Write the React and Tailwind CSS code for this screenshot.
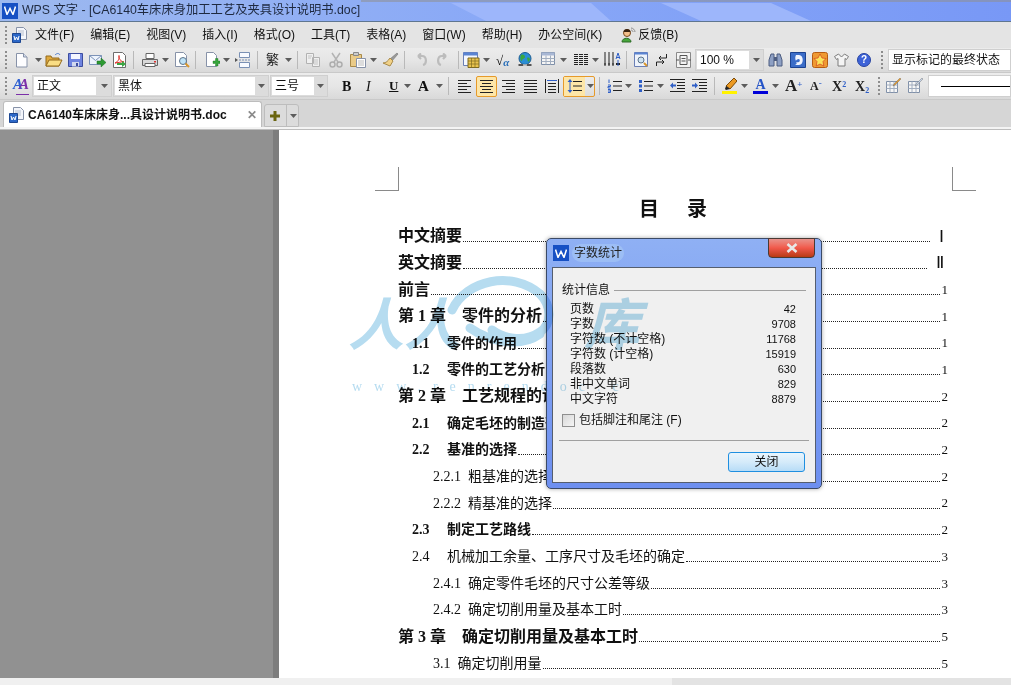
import React from "react";

const cjk = "font-['Liberation_Sans','Noto_Sans_CJK_SC',sans-serif]";
const serif = "font-['Liberation_Serif','Noto_Sans_CJK_SC',serif]";

const menus = ["文件(F)", "编辑(E)", "视图(V)", "插入(I)", "格式(O)", "工具(T)", "表格(A)", "窗口(W)", "帮助(H)", "办公空间(K)"];

const tocRows = [
  { label: "中文摘要", page: "Ⅰ", kind: "top" },
  { label: "英文摘要", page: "Ⅱ", kind: "top" },
  { label: "前言", page: "1", kind: "top" },
  { label: "第 1 章    零件的分析", page: "1", kind: "chapter" },
  { label: "1.1     零件的作用", page: "1", kind: "section" },
  { label: "1.2     零件的工艺分析", page: "1", kind: "section" },
  { label: "第 2 章    工艺规程的设计", page: "2", kind: "chapter" },
  { label: "2.1     确定毛坯的制造形式", page: "2", kind: "section" },
  { label: "2.2     基准的选择", page: "2", kind: "section" },
  { label: "2.2.1  粗基准的选择", page: "2", kind: "sub" },
  { label: "2.2.2  精基准的选择", page: "2", kind: "sub" },
  { label: "2.3     制定工艺路线", page: "2", kind: "section" },
  { label: "2.4     机械加工余量、工序尺寸及毛坯的确定", page: "3", kind: "sectionLight" },
  { label: "2.4.1  确定零件毛坯的尺寸公差等级", page: "3", kind: "sub" },
  { label: "2.4.2  确定切削用量及基本工时", page: "3", kind: "sub" },
  { label: "第 3 章    确定切削用量及基本工时", page: "5", kind: "chapter" },
  { label: "3.1  确定切削用量", page: "5", kind: "sub2" },
];

const stats = [
  ["页数", "42"],
  ["字数", "9708"],
  ["字符数 (不计空格)", "11768"],
  ["字符数 (计空格)", "15919"],
  ["段落数", "630"],
  ["非中文单词", "829"],
  ["中文字符", "8879"],
];

function I({ children, w = 16, h = 16 }) {
  return (
    <svg width={w} height={h} viewBox={`0 0 ${w} ${h}`} className="shrink-0 block">
      {children}
    </svg>
  );
}

function Grip({ className = "" }) {
  return (
    <div className={`flex flex-col gap-[2px] w-[2px] shrink-0 ${className}`}>
      <span className="block w-[2px] h-[2px] bg-[#8d8d8d]" />
      <span className="block w-[2px] h-[2px] bg-[#8d8d8d]" />
      <span className="block w-[2px] h-[2px] bg-[#8d8d8d]" />
      <span className="block w-[2px] h-[2px] bg-[#8d8d8d]" />
      <span className="block w-[2px] h-[2px] bg-[#8d8d8d]" />
    </div>
  );
}

function Sep({ className = "" }) {
  return <div className={`w-[1px] h-[18px] bg-[#b9b9b9] shrink-0 ${className}`} />;
}

function Caret({ className = "" }) {
  return (
    <svg width="7" height="4" viewBox="0 0 7 4" className={`shrink-0 ${className}`}>
      <path d="M0 0h7L3.5 4z" fill="#5c5c5c" />
    </svg>
  );
}

const DocIcon = () => (
  <I>
    <path d="M2.5 1.5h7l3.5 3.5v10h-10.500z" fill="#fdfdff" stroke="#8792a8" />
    <path d="M9.500 1.500v3.500h3.500" fill="#d4dcec" stroke="#8792a8" />
  </I>
);
const OpenIcon = () => (
  <I w={18}>
    <path d="M1 4h5l1 2h7v8H1z" fill="#dfa93c" stroke="#946a1c" />
    <path d="M4 8h13l-3 6H1z" fill="#f9dd84" stroke="#946a1c" />
    <path d="M10 3c2-2 4-2 5 0" stroke="#4d7bc9" fill="none" />
  </I>
);
const SaveIcon = () => (
  <I w={15}>
    <path d="M.5 1.500h14v13H.5z" fill="#6f84e0" stroke="#3c4d9f" />
    <path d="M3 2h9v5H3z" fill="#f4f6ff" />
    <path d="M4 10h7v4.500H4z" fill="#d2d9ef" />
    <path d="M8 11h2v3H8z" fill="#3c4d9f" />
  </I>
);
const MailIcon = () => (
  <I w={17}>
    <path d="M.5 3.500h12v9H.5z" fill="#eef4fd" stroke="#7c93b8" />
    <path d="M.5 3.500l6 5 6-5" fill="none" stroke="#7c93b8" />
    <path d="M8 9h4V6l5 4.500-5 4.500v-3H8z" fill="#2d9a32" stroke="#1b6a20" strokeWidth=".5" />
  </I>
);
const PdfIcon = () => (
  <I w={15}>
    <path d="M1.500 .5h9l3 3v12h-12z" fill="#fff" stroke="#6d6d6d" />
    <path d="M3 11C6 10 8 6 7 3.500c-1 3 2 6 5 6.500-3-.5-7 1-9 1z" fill="none" stroke="#df2c25" />
    <path d="M5 11h5V9l4 3-4 3v-2H5z" fill="#3aa644" />
  </I>
);
const PrintIcon = () => (
  <I w={18}>
    <path d="M5 1.500h8v5H5z" fill="#fff" stroke="#666" />
    <path d="M1.500 7.500h15v6h-15z" fill="#d8d8d8" stroke="#666" />
    <path d="M4 11.500h10v3H4z" fill="#fff" stroke="#666" />
    <path d="M13 9h2v1.500h-2z" fill="#d33" />
  </I>
);
const PreviewIcon = () => (
  <I w={17}>
    <path d="M1.500 .5h8l3 3v11h-11z" fill="#fff" stroke="#8792a8" />
    <circle cx="9" cy="9" r="3.500" fill="#bfe3f7" stroke="#5d7389" />
    <path d="M11.500 11.500l3.500 3.500" stroke="#d9962b" strokeWidth="2" />
  </I>
);
const NewPlusIcon = () => (
  <I w={15}>
    <path d="M1.500 .5h7l3 3v11h-10z" fill="#fff" stroke="#8792a8" />
    <path d="M8 9h2.500V6.500h2.500V9h2v2.500h-2V14h-2.500v-2.500H8z" fill="#36a53b" stroke="#1d6e22" strokeWidth=".4" />
  </I>
);
const PageBreakIcon = () => (
  <I w={16}>
    <path d="M4.500 .5h10v5h-10zM4.500 10.500h10v5h-10z" fill="#f8faff" stroke="#7a90b4" />
    <path d="M0 6l3 2-3 2z" fill="#555" />
    <path d="M4 8h12" stroke="#7a90b4" strokeDasharray="2 1" />
  </I>
);
const CopyIcon = () => (
  <I w={16}>
    <path d="M1.500 1.500h7v10h-7zM7.500 5.500h7v9h-7z" fill="#f0f0f0" stroke="#b2b2b2" />
    <path d="M9 8h4M9 10h4M9 12h4M3 4h4M3 6h3" stroke="#c4c4c4" />
  </I>
);
const CutIcon = () => (
  <I w={14}>
    <path d="M3 1l6 9M11 1L5 10" stroke="#b3b3b3" strokeWidth="1.500" />
    <circle cx="3.500" cy="12.500" r="2.500" fill="none" stroke="#adadad" strokeWidth="1.500" />
    <circle cx="10.500" cy="12.500" r="2.500" fill="none" stroke="#adadad" strokeWidth="1.500" />
  </I>
);
const PasteIcon = () => (
  <I w={17}>
    <path d="M.5 2.500h11v12H.5z" fill="#eacb88" stroke="#a98a49" />
    <path d="M3.500 .5h5v3h-5z" fill="#ccc" stroke="#888" />
    <path d="M6.500 6.500h9v9h-9z" fill="#fff" stroke="#8792a8" />
    <path d="M8 9h6M8 11h6M8 13h6" stroke="#bbb" />
  </I>
);
const BrushIcon = () => (
  <I w={17}>
    <path d="M15 1l1 1-6 7-2-2z" fill="#9a9a9a" stroke="#666" strokeWidth=".5" />
    <path d="M8 6l3 3-3 5-7-3c3 0 5-2 7-5z" fill="#f1d187" stroke="#a98a49" />
  </I>
);
const UndoIcon = ({ flip }) => (
  <svg width="14" height="14" viewBox="0 0 14 14" className={`shrink-0 ${flip ? "-scale-x-100" : ""}`}>
    <path d="M4 3h4c5 0 5 8 1 9M4 3l3-2.500M4 3l3 3" fill="none" stroke="#bcbcbc" strokeWidth="2.200" />
  </svg>
);
const TableCalcIcon = () => (
  <I w={17}>
    <path d="M.5 .5h14v13H.5z" fill="#f4f7ff" stroke="#6a7fb5" />
    <path d="M.5 .5h14v3H.5z" fill="#5a84d2" />
    <path d="M5 6h11v9.500H5z" fill="#e9c34e" stroke="#7e6a21" />
    <path d="M5 9h11M5 12h11M8.500 6v9M12 6v9" stroke="#7e6a21" strokeWidth=".7" />
  </I>
);
const SqrtIcon = () => (
  <div className={`flex items-end w-[16px] h-[16px] text-[13px] leading-[14px] ${serif}`}>
    <span className="text-black">√</span>
    <span className="text-[#2a6fb8] italic font-bold text-[11px] leading-[12px]">α</span>
  </div>
);
const GlobeIcon = () => (
  <I w={16}>
    <circle cx="8" cy="6.500" r="6" fill="#2b8fd5" stroke="#1a5b90" />
    <path d="M4 3c2-1 4 0 4 2s-3 1-3 4c-2 0-2-4-1-6zM10 6c2-1 3 0 3 2l-2 2z" fill="#3aa83f" />
    <path d="M1.500 13h5M9.500 13h5" stroke="#555" strokeWidth="2" />
    <path d="M6 13h4" stroke="#bbb" strokeWidth="1.500" />
  </I>
);
const TableIcon = () => (
  <I w={14}>
    <path d="M.5 .5h13v12H.5z" fill="#f5f5f5" stroke="#7e8fa8" />
    <path d="M.5 .5h13v3H.5z" fill="#a8b7d4" />
    <path d="M.5 6.500h13M.5 9.500h13M5 3.500v9M9.500 3.500v9" stroke="#a2aec0" />
  </I>
);
const LinesIcon = () => (
  <I w={14} h={12}>
    <path d="M0 .5h14M0 2.500h14M0 4.500h14M0 6.500h14M0 8.500h14M0 10.500h14" stroke="#222" />
    <path d="M4.500 0v11M9.500 0v11" stroke="#e6e6e6" />
  </I>
);
const ColsIcon = () => (
  <I w={17}>
    <path d="M1 0v14M5 0v14M9 0v14" stroke="#222" />
    <path d="M.5 12h1M4.500 12h1M8.500 12h1M12 12h4" stroke="#222" strokeWidth="2" />
    <path d="M12 7l2-6 2 6M12.500 5.500h3M14 8v6" stroke="#2f5fc7" fill="none" />
  </I>
);
const ReviewIcon = () => (
  <I w={14}>
    <path d="M.5 .5h13v14H.5z" fill="#eef3fb" stroke="#6a7fb5" />
    <path d="M.5 .5h13v2H.5z" fill="#5a84d2" />
    <circle cx="7" cy="8" r="3" fill="#cfe3f2" stroke="#5d7389" />
    <path d="M10 11l3 3" stroke="#d9962b" strokeWidth="2" />
  </I>
);
const ArrowsIcon = () => (
  <I w={11} h={14}>
    <path d="M10.500 1v4H3M5 3L3 5l2 2M.5 13V9H8M6 7l2 2-2 2" fill="none" stroke="#222" />
  </I>
);
const FrameIcon = () => (
  <I w={15}>
    <path d="M.5 .5h14v15H.5z" fill="#f4f4f4" stroke="#8a8a8a" />
    <path d="M4 3.500h7v9H4zM5.500 6.500h4M5.500 9h4M0 8h3M12 8h3" fill="none" stroke="#555" />
  </I>
);
const BinocularsIcon = () => (
  <I w={15}>
    <path d="M1 14V8l2-6h3v12zM14 14V8l-2-6H9v12z" fill="#8ea0c4" stroke="#4d5d80" />
    <path d="M6 5h3v4H6z" fill="#4d5d80" />
  </I>
);
const BlueBoxIcon = () => (
  <I w={16}>
    <path d="M.5 .5h15v15H.5z" fill="#3b6dc8" stroke="#1c4391" />
    <path d="M6 3h3c5 0 5 10 0 10H5c2-1 2-2 1-3 3 1 5-1 3-3-2 0-3 1-3 2-1-2-1-4 0-6z" fill="#f1f5ff" />
  </I>
);
const StarBoxIcon = () => (
  <I w={16}>
    <rect x=".5" y=".5" width="15" height="15" rx="2" fill="#ef9a32" stroke="#b65c12" />
    <path d="M8 2l2 4 4 .5-3 3 .8 4.500L8 12l-3.800 2L5 9.500l-3-3L6 6z" fill="#fbe35a" stroke="#d3401f" strokeWidth=".7" />
  </I>
);
const ShirtIcon = () => (
  <I w={15}>
    <path d="M4.500 2L.5 4.500l2 3 1.500-1V14h7V6.500l1.500 1 2-3L10.500 2 7.500 5z" fill="#f4f4f4" stroke="#7b7b7b" />
  </I>
);
const HelpIcon = () => (
  <div className="w-[14px] h-[14px] rounded-full bg-[#3d63d8] border border-[#2743a0] text-white text-[10px] font-bold leading-[12px] text-center shrink-0 font-['Liberation_Sans',sans-serif]">
    ?
  </div>
);
const StyleIcon = () => (
  <div className={`relative w-[16px] h-[18px] shrink-0 italic font-bold text-[15px] leading-[15px] ${serif}`}>
    <span className="text-[#2d5fd2]">A</span>
    <span className="absolute left-[6px] top-0 text-[#7b2fa8]">A</span>
    <span className="absolute left-[3px] bottom-0 w-[13px] h-[1px] bg-[#7b2fa8]" />
  </div>
);
const Align = ({ kind }) => {
  const d = {
    left: "M0 .5h13M0 3.500h9M0 6.500h13M0 9.500h9M0 12.500h13",
    center: "M0 .5h13M2 3.500h9M0 6.500h13M2 9.500h9M0 12.500h13",
    right: "M0 .5h13M4 3.500h9M0 6.500h13M4 9.500h9M0 12.500h13",
    justify: "M0 .5h13M0 3.500h13M0 6.500h13M0 9.500h13M0 12.500h13",
  }[kind];
  return (
    <I w={13} h={13}>
      <path d={d} stroke="#222" />
    </I>
  );
};
const DistIcon = () => (
  <I w={14} h={14}>
    <path d="M.5 0v14M13.500 0v14M3 4.500h8M3 7.500h8M3 10.500h8M3 13.500h8" stroke="#222" />
    <path d="M2 1.500h10" stroke="#2f5fc7" />
  </I>
);
const SpacingIcon = () => (
  <I w={15} h={14}>
    <path d="M6 2.500h9M6 7h9M6 11.500h9" stroke="#222" />
    <path d="M3 0l2.500 3h-5zM3 14l2.500-3h-5zM2.500 3h1v8h-1z" fill="#2f5fc7" />
  </I>
);
const NumberIcon = () => (
  <I w={15} h={14}>
    <path d="M6 2.500h9M6 7h9M6 11.500h9" stroke="#222" />
    <path d="M2 .5v3.500M1 6h2.500v1.500H1V9h2.500M1 10.500h2.500v3H1M1 12h2.500" stroke="#2f5fc7" fill="none" />
  </I>
);
const BulletIcon = () => (
  <I w={14} h={14}>
    <path d="M5 2.500h9M5 7h9M5 11.500h9" stroke="#222" />
    <path d="M0 1h3v3H0zM0 5.500h3v3H0zM0 10h3v3H0z" fill="#2f5fc7" />
  </I>
);
const IndentIcon = ({ out }) => (
  <I w={15} h={14}>
    <path d="M0 .5h15M7 3.500h8M7 6.500h8M7 9.500h8M0 12.500h15" stroke="#222" />
    <path d={out ? "M0 6.500l3-3v2h3v2H3v2z" : "M6 6.500l-3-3v2H0v2h3v2z"} fill="#2f5fc7" />
  </I>
);
const PenIcon = () => (
  <I w={15}>
    <path d="M12 0l3 3-7 8-4-3z" fill="#ec9a23" stroke="#7b4a08" />
    <path d="M4 8l4 3-4 1-1-1z" fill="#222" />
    <path d="M0 13h15v3H0z" fill="#fff200" />
  </I>
);
const TableEditIcon = ({ tone }) => (
  <I w={15}>
    <path d="M.5 3.500h11v11H.5z" fill="#f7f7f7" stroke="#8090a8" />
    <path d="M.5 7h11M.5 10.500h11M4 3.500v11M8 3.500v11" stroke="#a2aec0" />
    <path d="M14 0l1 1-6 6-2 1 1-2z" fill={tone} stroke="#666" strokeWidth=".4" />
  </I>
);
const WpsLogo = () => (
  <div className="shrink-0 bg-[#1650c4] flex items-center justify-center w-[16px] h-[16px]">
    <svg width="12" height="9" viewBox="0 0 12 9">
      <path d="M.5 .5l2.500 8 3-6 3 6 2.500-8" fill="none" stroke="#fff" strokeWidth="1.500" />
    </svg>
  </div>
);
const WordDocIcon = () => (
  <I w={15}>
    <path d="M4.500 .5h7l3 3v9h-10z" fill="#f4f6fb" stroke="#8792a8" />
    <path d="M6 4h6M6 6h6M6 8h6" stroke="#b6bfce" />
    <path d="M.5 6.500h8v9h-8z" fill="#2c67c7" stroke="#1d4792" />
    <path d="M2 9l1 4 1.500-3 1.500 3 1-4" fill="none" stroke="#fff" />
  </I>
);
const FeedbackIcon = () => (
  <I w={15}>
    <circle cx="6" cy="6" r="3.500" fill="#f4c08c" stroke="#7a4a1c" />
    <path d="M2.500 5c0-4 7-4 7 0z" fill="#3a2412" />
    <path d="M1 15c0-5 9-5 9 0z" fill="#47a63c" stroke="#2b6a24" />
    <path d="M10 1c2 0 4 2 4 4M10 3c1 0 2 1 2 2" fill="none" stroke="#8a8a8a" />
  </I>
);

function Combo({ width, inner, text, className = "" }) {
  return (
    <div className={`flex items-center h-[22px] shrink-0 bg-[#dcdcdc] border border-[#cfcfcf] ${width} ${className}`}>
      <div className={`h-[18px] ml-[1px] bg-white text-[12px] leading-[18px] px-[3px] overflow-hidden whitespace-nowrap text-[#111] ${inner}`}>
        {text}
      </div>
      <Caret className="ml-auto mr-[3px]" />
    </div>
  );
}

function Toolbar({ children, className = "" }) {
  return (
    <div className={`flex items-center bg-gradient-to-b from-[#ececec] via-[#e6e6e6] to-[#d9d9d9] border-b border-[#c9c9c9] overflow-hidden ${className}`}>
      {children}
    </div>
  );
}

function Leader({ row }) {
  const { label, page, kind } = row;
  const styles = {
    top: "text-[16px] font-bold pl-0",
    chapter: "text-[16px] font-bold pl-0",
    section: "text-[14px] font-bold pl-[14px]",
    sectionLight: "text-[14px] font-normal pl-[14px]",
    sub: "text-[14px] font-normal pl-[35px]",
    sub2: "text-[14px] font-normal pl-[35px]",
  }[kind];
  const roman = page === "Ⅰ" || page === "Ⅱ";
  return (
    <div className={`flex items-center h-[26.7px] ${serif} text-[#111] ${styles}`}>
      <span className="whitespace-pre shrink-0">{label}</span>
      <span className="flex-1 ml-[1px] mr-[2px] mt-[10px] border-b border-dotted border-[#222]" />
      <span className={`shrink-0 font-normal ${roman ? "ml-[7px] mr-[4px] text-[17px] font-['Liberation_Serif',serif]" : "text-[13px]"}`}>{page}</span>
    </div>
  );
}

function Watermark() {
  return (
    <div className="absolute left-[340px] top-[268px] w-[300px] h-[132px] pointer-events-none mix-blend-multiply">
      <svg width="300" height="100" viewBox="0 0 300 100" className="absolute left-0 top-0">
        <path d="M112 42c14-30 60-40 88-16 12 12 12 30 0 38-14 10-34 8-48-2M130 60c20 14 50 20 70 6" fill="none" stroke="#b6dcf0" strokeWidth="9" strokeLinecap="round" />
      </svg>
      <div className={`absolute left-[8px] top-[26px] flex text-[#b6dcf0] text-[56px] leading-[64px] italic font-bold ${cjk}`}>
        <span className="w-[56px]">人</span>
        <span className="w-[180px]">人</span>
        <span>库</span>
      </div>
      <div className="absolute left-[12px] top-[108px] text-[#b6dcf0] text-[14px] tracking-[12px] font-['Liberation_Serif',serif] whitespace-nowrap">
        www.renrendoc.c
      </div>
    </div>
  );
}

function Dialog() {
  return (
    <div className={`absolute left-[546px] top-[238px] w-[276px] h-[251px] rounded-[5px] border border-[#3b4a66] bg-gradient-to-b from-[#8fb0f4] to-[#6d8ff0] flex flex-col ${cjk} shadow-[0_0_4px_rgba(0,0,0,0.35)]`}>
      <div className="relative h-[28px] shrink-0 flex items-center pl-[6px] gap-[3px]">
        <WpsLogo />
        <span className="text-[12px] text-[#222] bg-[#a7c8f5]/60 rounded-full px-[2px]">字数统计</span>
        <div className="absolute right-[6px] top-[-1px] w-[47px] h-[20px] rounded-b-[4px] border border-[#4a3a34] bg-gradient-to-b from-[#e8918a] via-[#f0584a] to-[#b83a10] flex items-center justify-center">
          <svg width="12" height="10" viewBox="0 0 12 10">
            <path d="M1.500 1l9 8M10.500 1l-9 8" stroke="#e8e8e8" strokeWidth="2.600" />
          </svg>
        </div>
      </div>
      <div className="mx-[5px] mb-[5px] flex-1 bg-[#f0f0f0] border border-[#555e6e] px-[6px] pt-[15px] text-[12px] text-[#111]">
        <div className="flex items-center ml-[3px] mr-[3px] h-[14px]">
          <span>统计信息</span>
          <span className="flex-1 h-[1px] bg-[#a0a0a0] ml-[4px]" />
        </div>
        <div className="mt-[5px] ml-[11px] mr-[13px] flex flex-col">
          {stats.map(([name, value]) => (
            <div key={name} className="flex justify-between h-[15px] leading-[15px] whitespace-nowrap">
              <span>{name}</span>
              <span className="font-['Liberation_Sans',sans-serif] text-[11px]">{value}</span>
            </div>
          ))}
        </div>
        <div className="flex items-center gap-[4px] ml-[3px] mt-[6px] h-[14px]">
          <span className="w-[13px] h-[13px] border border-[#8f8f8f] bg-gradient-to-br from-[#d8d8d8] to-[#f5f5f5] shrink-0" />
          <span>包括脚注和尾注 (F)</span>
        </div>
        <div className="h-[1px] bg-[#a0a0a0] mt-[13px]" />
        <div className="flex justify-end mt-[11px] mr-[4px]">
          <div className="w-[77px] h-[20px] rounded-[3px] border border-[#1f8fe0] bg-gradient-to-b from-[#e9f5fd] via-[#d5ebfa] to-[#b7dcf7] text-center leading-[18px]">
            关闭
          </div>
        </div>
      </div>
    </div>
  );
}

export default function App() {
  return (
    <div className={`relative w-[1011px] h-[685px] overflow-hidden bg-[#e3e3e3] flex flex-col ${cjk}`}>
      {/* title bar */}
      <div className="relative h-[22px] shrink-0 flex items-center gap-[4px] pl-[2px] border-b border-[#5f7690] bg-gradient-to-r from-[#9db9ef] via-[#89a8f7] to-[#7898f6] overflow-hidden">
        <WpsLogo />
        <span className="text-[12.3px] text-[#1f2a40] whitespace-nowrap">WPS 文字 - [CA6140车床床身加工工艺及夹具设计说明书.doc]</span>
        <svg width="650" height="22" viewBox="0 0 650 22" className="absolute right-0 top-0">
          <path d="M0 0h650v2H0z" fill="#8f8f8f" opacity=".55" />
          <path d="M90 3h140l20 18H125zM300 3h110l40 18H340z" fill="#9db6fb" />
        </svg>
      </div>

      {/* menu */}
      <div className="h-[26px] shrink-0 flex items-center bg-[#e4e4e4] text-[12px] text-[#111]">
        <Grip className="ml-[5px]" />
        <div className="ml-[5px]">
          <WordDocIcon />
        </div>
        <div className="flex items-center gap-[16px] ml-[8px]">
          {menus.map((m) => (
            <span key={m} className="whitespace-nowrap">{m}</span>
          ))}
          <span className="flex items-center gap-[2px] ml-[3px] whitespace-nowrap">
            <FeedbackIcon />
            反馈(B)
          </span>
        </div>
      </div>

      {/* standard toolbar */}
      <Toolbar className="h-[25px] shrink-0">
        <Grip className="ml-[5px]" />
        <div className="ml-[7px]"><DocIcon /></div>
        <Caret className="ml-[5px]" />
        <div className="ml-[3px]"><OpenIcon /></div>
        <div className="ml-[5px]"><SaveIcon /></div>
        <div className="ml-[6px]"><MailIcon /></div>
        <div className="ml-[6px]"><PdfIcon /></div>
        <Sep className="ml-[6px]" />
        <div className="ml-[7px]"><PrintIcon /></div>
        <Caret className="ml-[3px]" />
        <div className="ml-[5px]"><PreviewIcon /></div>
        <Sep className="ml-[4px]" />
        <div className="ml-[9px]"><NewPlusIcon /></div>
        <Caret className="ml-[3px]" />
        <div className="ml-[5px]"><PageBreakIcon /></div>
        <Sep className="ml-[6px]" />
        <span className="ml-[8px] w-[14px] text-[13px] leading-[16px] text-[#222]">繁</span>
        <Caret className="ml-[5px]" />
        <Sep className="ml-[5px]" />
        <div className="ml-[7px]"><CopyIcon /></div>
        <div className="ml-[8px]"><CutIcon /></div>
        <div className="ml-[7px]"><PasteIcon /></div>
        <Caret className="ml-[3px]" />
        <div className="ml-[5px]"><BrushIcon /></div>
        <Sep className="ml-[5px]" />
        <div className="ml-[9px]"><UndoIcon /></div>
        <div className="ml-[8px]"><UndoIcon flip /></div>
        <Sep className="ml-[8px]" />
        <div className="ml-[4px]"><TableCalcIcon /></div>
        <Caret className="ml-[3px]" />
        <div className="ml-[6px]"><SqrtIcon /></div>
        <div className="ml-[5px]"><GlobeIcon /></div>
        <div className="ml-[8px]"><TableIcon /></div>
        <Caret className="ml-[5px]" />
        <div className="ml-[7px]"><LinesIcon /></div>
        <Caret className="ml-[4px]" />
        <div className="ml-[5px]"><ColsIcon /></div>
        <Sep className="ml-[5px]" />
        <div className="ml-[7px]"><ReviewIcon /></div>
        <div className="ml-[8px]"><ArrowsIcon /></div>
        <div className="ml-[9px]"><FrameIcon /></div>
        <Combo width="w-[69px]" inner="w-[52px]" text="100 %" className="ml-[4px]" />
        <div className="ml-[4px]"><BinocularsIcon /></div>
        <div className="ml-[7px]"><BlueBoxIcon /></div>
        <div className="ml-[6px]"><StarBoxIcon /></div>
        <div className="ml-[6px]"><ShirtIcon /></div>
        <div className="ml-[8px]"><HelpIcon /></div>
        <Grip className="ml-[10px]" />
        <div className="ml-[5px] h-[22px] flex-1 border border-[#cfcfcf] bg-white text-[12px] leading-[20px] px-[3px] whitespace-nowrap text-[#111]">
          显示标记的最终状态
        </div>
      </Toolbar>

      {/* format toolbar */}
      <Toolbar className="h-[27px] shrink-0">
        <Grip className="ml-[5px]" />
        <div className="ml-[6px]"><StyleIcon /></div>
        <Combo width="w-[80px]" inner="w-[62px]" text="正文" className="ml-[3px]" />
        <Combo width="w-[156px]" inner="w-[140px]" text="黑体" className="ml-[1px]" />
        <Combo width="w-[58px]" inner="w-[42px]" text="三号" className="ml-[1px]" />
        <div className={`flex items-center text-[#111] ${serif}`}>
          <span className="ml-[14px] w-[12px] font-bold text-[14px]">B</span>
          <span className="ml-[12px] w-[10px] italic text-[14px]">I</span>
          <span className="ml-[13px] w-[10px] underline font-bold text-[13px]">U</span>
          <Caret className="ml-[5px]" />
          <span className="ml-[7px] w-[15px] font-bold text-[15px]">A</span>
          <Caret className="ml-[3px]" />
        </div>
        <Sep className="ml-[5px]" />
        <div className="ml-[9px]"><Align kind="left" /></div>
        <div className="ml-[5px] w-[21px] h-[21px] border border-[#e69a2a] rounded-[2px] bg-[#fde6a8] flex items-center justify-center"><Align kind="center" /></div>
        <div className="ml-[5px]"><Align kind="right" /></div>
        <div className="ml-[9px]"><Align kind="justify" /></div>
        <div className="ml-[8px]"><DistIcon /></div>
        <div className="ml-[4px] h-[21px] w-[32px] border border-[#e69a2a] rounded-[2px] flex items-center shrink-0">
          <div className="w-[21px] h-full bg-[#fde6a8] flex items-center justify-center"><SpacingIcon /></div>
          <Caret className="ml-[2px]" />
        </div>
        <Sep className="ml-[4px]" />
        <div className="ml-[7px]"><NumberIcon /></div>
        <Caret className="ml-[3px]" />
        <div className="ml-[7px]"><BulletIcon /></div>
        <Caret className="ml-[4px]" />
        <div className="ml-[6px]"><IndentIcon out /></div>
        <div className="ml-[7px]"><IndentIcon /></div>
        <Sep className="ml-[7px]" />
        <div className="ml-[7px]"><PenIcon /></div>
        <Caret className="ml-[4px]" />
        <div className={`ml-[5px] w-[15px] h-[16px] flex flex-col items-center text-[#2554c7] font-bold text-[14px] leading-[13px] ${serif}`}>
          A
          <span className="w-[15px] h-[3px] bg-[#0000d8]" />
        </div>
        <Caret className="ml-[4px]" />
        <div className={`flex items-center font-bold text-[#222] ${serif}`}>
          <span className="ml-[6px] w-[16px] text-[17px]">A<sup className="text-[#2f5fc7] text-[9px]">+</sup></span>
          <span className="ml-[9px] w-[12px] text-[12px]">A<sup className="text-[#2f5fc7] text-[9px]">-</sup></span>
          <span className="ml-[10px] w-[14px] text-[14px]">X<sup className="text-[#2f5fc7] text-[8px]">2</sup></span>
          <span className="ml-[9px] w-[13px] text-[14px]">X<sub className="text-[#2f5fc7] text-[8px]">2</sub></span>
        </div>
        <Grip className="ml-[10px]" />
        <div className="ml-[6px]"><TableEditIcon tone="#e69a2a" /></div>
        <div className="ml-[7px]"><TableEditIcon tone="#c6d4e8" /></div>
        <div className="ml-[5px] h-[22px] flex-1 border border-[#cfcfcf] bg-white flex items-center pl-[12px]">
          <span className="flex-1 h-[1px] bg-black" />
        </div>
      </Toolbar>

      {/* tabs */}
      <div className="h-[30px] shrink-0 bg-[#d6d6d6] flex flex-col">
        <div className="h-[26px] mt-[1px] flex items-end pl-[3px]">
          <div className="w-[259px] h-[26px] bg-white rounded-t-[3px] border border-b-0 border-[#bdbdbd] flex items-center pl-[5px] pr-[4px] gap-[4px]">
            <WordDocIcon />
            <span className="text-[12px] font-bold text-[#111] whitespace-nowrap">CA6140车床床身...具设计说明书.doc</span>
            <span className="ml-auto text-[#8a8a8a] text-[12px] font-bold">✕</span>
          </div>
          <div className="ml-[2px] w-[35px] h-[23px] rounded-t-[3px] border border-[#bdbdbd] bg-[#dcdcdc] flex items-center">
            <svg width="21" height="12" viewBox="0 0 21 12" className="shrink-0">
              <path d="M5 6h10M10 1v10" stroke="#6a6510" strokeWidth="3" />
            </svg>
            <span className="w-[1px] h-full bg-[#bdbdbd]" />
            <Caret className="ml-[3px]" />
          </div>
        </div>
        <div className="h-[2px] bg-[#f4f4f4]" />
        <div className="h-[1px] bg-[#bdbdbd]" />
      </div>

      {/* work area */}
      <div className="flex-1 flex min-h-0">
        <div className="w-[273px] shrink-0 bg-[#919191]" />
        <div className="w-[6px] shrink-0 bg-[#7d7d7d]" />
        <div className="flex-1 bg-white min-w-0 overflow-hidden">
          <div className="flex justify-between ml-[96px] w-[601px] h-[61px] items-end">
            <span className="w-[24px] h-[24px] border-r border-b border-[#8a8a8a]" />
            <span className="w-[24px] h-[24px] border-l border-b border-[#8a8a8a]" />
          </div>
          <div className="ml-[119px] w-[550px]">
            <div className="h-[28px] flex items-center justify-center gap-[28px] text-[20px] font-bold text-[#111] mt-[4px]">
              <span>目</span>
              <span>录</span>
            </div>
            {tocRows.map((row) => (
              <Leader key={row.label} row={row} />
            ))}
          </div>
        </div>
      </div>

      {/* status bar */}
      <div className="h-[7px] shrink-0 flex">
        <div className="w-[672px] bg-[#f0f0f0]" />
        <div className="flex-1 bg-[#e3e3e3]" />
      </div>

      <Dialog />
      <Watermark />
    </div>
  );
}
